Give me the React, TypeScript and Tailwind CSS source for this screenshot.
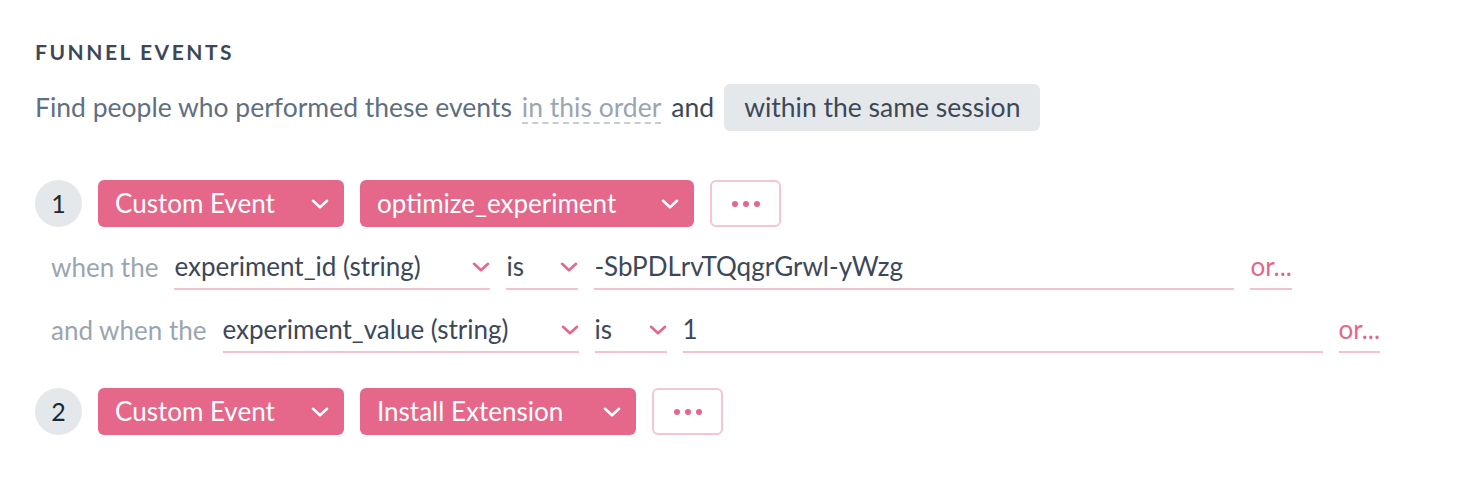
const font = { fontFamily: "Lato, 'Open Sans', sans-serif" };

const Chevron = ({ className }: { className: string }) => (
  <svg viewBox="0 0 18 10" className={className} fill="none" stroke="currentColor" strokeWidth={2.6} strokeLinecap="round" strokeLinejoin="round">
    <polyline points="2,1.8 9,8.2 16,1.8" />
  </svg>
);

const PinkButton = ({ label, width }: { label: string; width: string }) => (
  <button
    className={`flex h-[47px] ${width} items-center justify-between rounded-md bg-[#e5678a] pl-[17px] pr-[15px] text-[26px] text-white`}
  >
    <span>{label}</span>
    <Chevron className="h-[10px] w-[18px]" />
  </button>
);

const MoreButton = () => (
  <button className="flex h-[47px] w-[71px] items-center justify-center gap-[5px] rounded-md border-2 border-[#f6c4d3] bg-white">
    <span className="h-[6px] w-[6px] rounded-full bg-[#e5678a]" />
    <span className="h-[6px] w-[6px] rounded-full bg-[#e5678a]" />
    <span className="h-[6px] w-[6px] rounded-full bg-[#e5678a]" />
  </button>
);

const StepNumber = ({ n }: { n: number }) => (
  <div className="flex h-[47px] w-[47px] items-center justify-center rounded-full bg-[#e5e8eb] text-[25px] text-[#1f2933]">
    {n}
  </div>
);

const Select = ({ value, width }: { value: string; width: string }) => (
  <div
    className={`flex h-[45px] ${width} items-center justify-between border-b-2 border-[#f3c1d0] text-[26px] text-[#3c4858]`}
  >
    <span>{value}</span>
    <Chevron className="h-[10px] w-[18px] text-[#e5678a]" />
  </div>
);

const Condition = ({
  prefix,
  prop,
  propWidth,
  value,
}: {
  prefix: string;
  prop: string;
  propWidth: string;
  value: string;
}) => (
  <div className="flex items-center gap-4 pl-[16px]">
    <span className="text-[26px] text-[#9aa5b1]">{prefix}</span>
    <Select value={prop} width={propWidth} />
    <Select value="is" width="w-[72px]" />
    <div className="flex h-[45px] w-[640px] items-center border-b-2 border-[#f3c1d0] text-[26px] text-[#3c4858]">
      {value}
    </div>
    <span className="flex h-[45px] items-center border-b-2 border-[#f3c1d0] text-[26px] text-[#e5678a]">
      or...
    </span>
  </div>
);

export default function App() {
  return (
    <div style={font} className="h-[490px] w-[1464px] bg-white px-[35px] pt-[39px]">
      <h2 className="text-[21px] font-bold leading-[26px] tracking-[0.12em] text-[#3c4858]">FUNNEL EVENTS</h2>

      <div className="mt-[19px] flex items-center text-[26.5px] text-[#5f6f82]">
        <span>Find people who performed these events</span>
        <span className="ml-[10px] border-b-2 border-dashed border-[#c6ccd3] leading-[30px] text-[#9aa5b1]">
          in this order
        </span>
        <span className="ml-[10px] text-[#3c4858]">and</span>
        <span className="ml-[10px] flex h-[47px] items-center rounded-md bg-[#e5e8eb] px-[20px] text-[#3c4858]">
          within the same session
        </span>
      </div>

      <div className="mt-[49px] flex flex-col">
        <div className="flex items-center gap-4">
          <StepNumber n={1} />
          <PinkButton label="Custom Event" width="w-[246px]" />
          <PinkButton label="optimize_experiment" width="w-[334px]" />
          <MoreButton />
        </div>

        <div className="mt-[18px] flex flex-col gap-[18px]">
          <Condition
            prefix="when the"
            prop="experiment_id (string)"
            propWidth="w-[316px]"
            value="-SbPDLrvTQqgrGrwl-yWzg"
          />
          <Condition
            prefix="and when the"
            prop="experiment_value (string)"
            propWidth="w-[356px]"
            value="1"
          />
        </div>

        <div className="mt-[35px] flex items-center gap-4">
          <StepNumber n={2} />
          <PinkButton label="Custom Event" width="w-[246px]" />
          <PinkButton label="Install Extension" width="w-[276px]" />
          <MoreButton />
        </div>
      </div>
    </div>
  );
}
